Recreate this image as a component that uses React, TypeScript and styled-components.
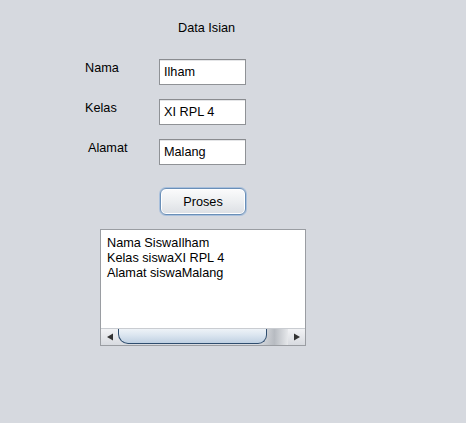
import React from "react";
import styled, { createGlobalStyle } from "styled-components";

const Global = createGlobalStyle`
  html, body { margin: 0; padding: 0; background: #d6d9df; }
  body { font-family: "Liberation Sans", Arial, sans-serif; font-size: 12.7px; color: #000; }
`;

const Page = styled.div`
  width: 466px;
  height: 423px;
  background: #d6d9df;
  display: flex;
  flex-direction: column;
  overflow: hidden;
`;

const Title = styled.div`
  margin: 20px 0 0 178px;
  height: 16px;
  line-height: 16px;
  font-size: 12.7px;
`;

const Form = styled.div`
  margin-top: 23px;
  display: flex;
  flex-direction: column;
  gap: 14px;
`;

const Row = styled.div`
  display: flex;
  align-items: flex-start;
`;

const Label = styled.div<{ $indent: number }>`
  width: ${(p) => 159 - p.$indent}px;
  padding-left: ${(p) => p.$indent}px;
  margin-top: 1px;
  line-height: 16px;
  font-size: 12.7px;
  box-sizing: content-box;
`;

const Field = styled.div`
  width: 87px;
  height: 26px;
  box-sizing: border-box;
  border: 1px solid #8f9296;
  border-top-color: #8a8c90;
  background: #fff;
  padding: 0 4px;
  line-height: 24px;
  font-size: 12.7px;
  box-shadow: inset 0 1px 0 #e4e5e7;
`;

const ButtonRow = styled.div`
  margin: 23px 0 0 160px;
`;

const Button = styled.div`
  width: 86px;
  height: 27px;
  box-sizing: border-box;
  border: 1px solid #6a8fb8;
  border-radius: 6px;
  background: linear-gradient(#fbfbfc 0%, #eef0f2 45%, #dcdfe4 100%);
  box-shadow: 0 0 0 1px #a9c0dc, inset 0 0 0 1px #ffffff;
  display: flex;
  align-items: center;
  justify-content: center;
  font-size: 12.7px;
`;

const Area = styled.div`
  margin: 14px 0 0 100px;
  width: 206px;
  height: 117px;
  box-sizing: border-box;
  border: 1px solid #9a9da2;
  background: #fff;
  display: flex;
  flex-direction: column;
`;

const AreaText = styled.div`
  flex: 1;
  padding: 6px 0 0 6px;
  line-height: 15px;
  font-size: 12.7px;
`;

const ScrollBar = styled.div`
  height: 16px;
  display: flex;
  align-items: stretch;
  background: linear-gradient(#f2f3f5, #d8dbe0);
  border-top: 1px solid #c9ccd1;
`;

const ArrowBtn = styled.div`
  width: 17px;
  display: flex;
  align-items: center;
  justify-content: center;
`;

const Track = styled.div`
  flex: 1;
  position: relative;
  background: linear-gradient(90deg, transparent 0%, transparent 82%, #b7bbc1 92%, #e6e8eb 100%);
`;

const Thumb = styled.div`
  position: absolute;
  left: 0;
  top: -2px;
  width: 149px;
  height: 17px;
  box-sizing: border-box;
  border: 1px solid #2f4d6e;
  border-top: none;
  border-radius: 0 0 9px 9px / 0 0 9px 9px;
  background: linear-gradient(#f4f7fa 0%, #dce6f0 50%, #bfd0e2 100%);
  clip-path: inset(2px 0 0 0);
  border-bottom-left-radius: 10px;
`;

export default function App() {
  return (
    <Page>
      <Global />
      <Title>Data Isian</Title>
      <Form>
        <Row>
          <Label $indent={85}>Nama</Label>
          <Field>Ilham</Field>
        </Row>
        <Row>
          <Label $indent={85}>Kelas</Label>
          <Field>XI RPL 4</Field>
        </Row>
        <Row>
          <Label $indent={88}>Alamat</Label>
          <Field>Malang</Field>
        </Row>
      </Form>
      <ButtonRow>
        <Button>Proses</Button>
      </ButtonRow>
      <Area>
        <AreaText>
          <div>Nama SiswaIlham</div>
          <div>Kelas siswaXI RPL 4</div>
          <div>Alamat siswaMalang</div>
        </AreaText>
        <ScrollBar>
          <ArrowBtn>
            <svg width="8" height="8" viewBox="0 0 8 8">
              <polygon points="1,4 7,0.5 7,7.5" fill="#333" />
            </svg>
          </ArrowBtn>
          <Track>
            <Thumb />
          </Track>
          <ArrowBtn>
            <svg width="8" height="8" viewBox="0 0 8 8">
              <polygon points="7,4 1,0.5 1,7.5" fill="#333" />
            </svg>
          </ArrowBtn>
        </ScrollBar>
      </Area>
    </Page>
  );
}
